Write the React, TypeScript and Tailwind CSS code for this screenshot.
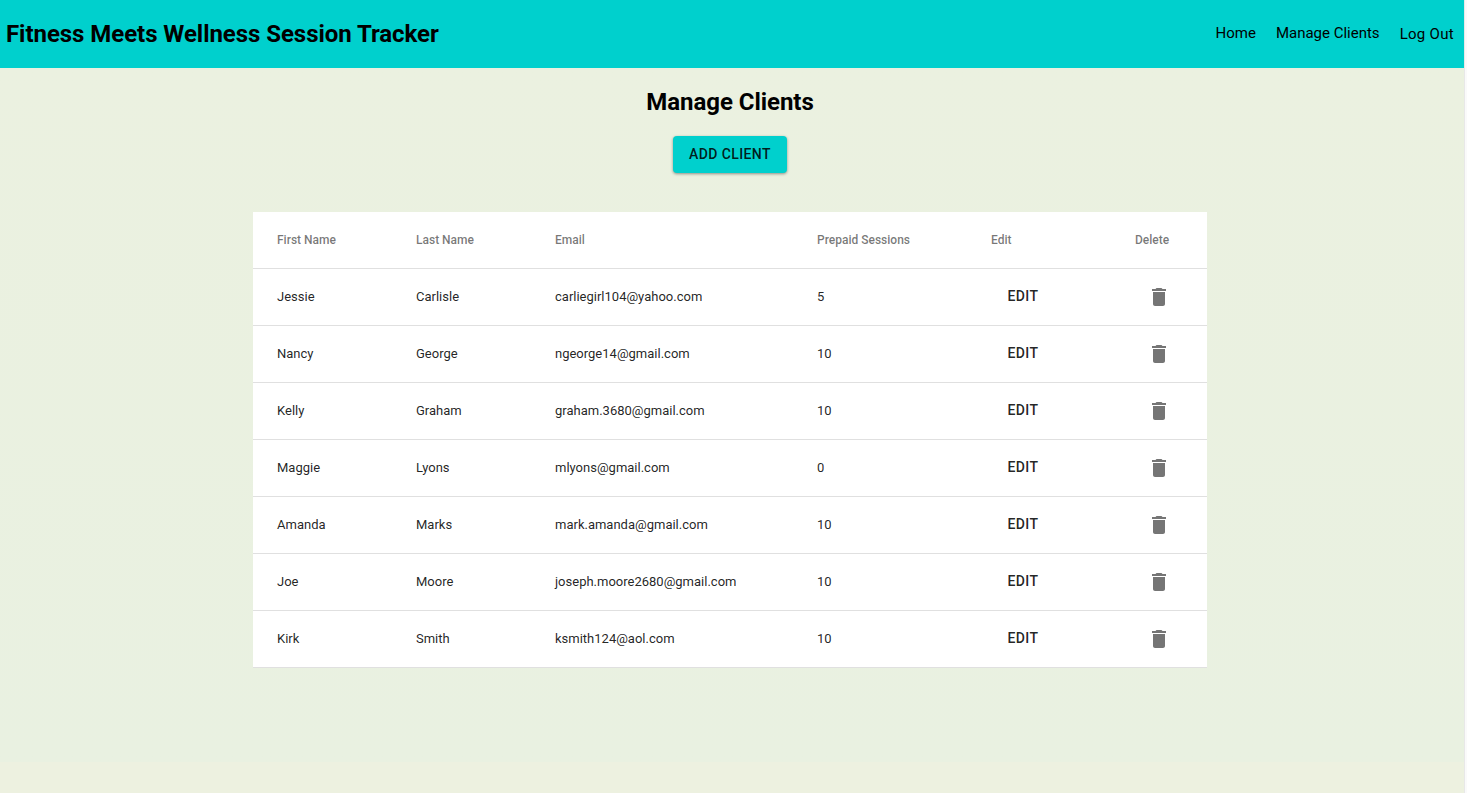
const clients = [
  ["Jessie", "Carlisle", "carliegirl104@yahoo.com", 5],
  ["Nancy", "George", "ngeorge14@gmail.com", 10],
  ["Kelly", "Graham", "graham.3680@gmail.com", 10],
  ["Maggie", "Lyons", "mlyons@gmail.com", 0],
  ["Amanda", "Marks", "mark.amanda@gmail.com", 10],
  ["Joe", "Moore", "joseph.moore2680@gmail.com", 10],
  ["Kirk", "Smith", "ksmith124@aol.com", 10],
];

const rowGrid =
  "grid h-[57px] grid-cols-[139px_139px_262px_174px_144px_1fr] items-center border-b border-[#e0e0e0] pl-6";

function TrashIcon() {
  return (
    <svg viewBox="0 0 24 24" className="h-6 w-6 fill-[#757575]" aria-hidden="true">
      <path d="M6 19c0 1.1.9 2 2 2h8c1.1 0 2-.9 2-2V7H6v12zM19 4h-3.5l-1-1h-5l-1 1H5v2h14V4z" />
    </svg>
  );
}

export default function App() {
  return (
    <div className="flex h-[793px] w-full overflow-hidden bg-[#fafafa] font-['Roboto',sans-serif] text-black">
      <div className="flex h-full w-[1464px] flex-col bg-[#edf1e0]">
        <header className="flex h-[68px] shrink-0 items-center justify-between bg-[#00d0cd] pr-[10px] pl-[6px]">
          <h2 className="text-2xl font-bold tracking-[-0.05px]">Fitness Meets Wellness Session Tracker</h2>
          <nav className="flex gap-5 text-[15px] leading-6">
            <a className="-mt-px">Home</a>
            <a className="-mt-px">Manage Clients</a>
            <a className="tracking-[0.3px]">Log Out</a>
          </nav>
        </header>
        <main className="flex h-[694px] shrink-0 flex-col items-center bg-linear-to-b from-[#ebf1e0] to-[#e9f1e1] pr-1">
          <h2 className="mt-[18px] text-2xl leading-8 font-bold tracking-[-0.05px]">Manage Clients</h2>
          <button className="mt-[18px] h-[37px] w-[114px] rounded bg-[#00d0cd] pb-0.5 text-sm font-medium tracking-[0.4px] text-black/87 shadow-[0_1px_3px_rgba(0,0,0,0.4)]">
            ADD CLIENT
          </button>
          <section className="mt-[39px] w-[954px] bg-white text-[13px] text-black/87">
            <div className={`${rowGrid} text-xs font-medium text-black/54`}>
              <span>First Name</span>
              <span>Last Name</span>
              <span>Email</span>
              <span>Prepaid Sessions</span>
              <span>Edit</span>
              <span>Delete</span>
            </div>
            {clients.map(([first, last, email, sessions]) => (
              <div key={email} className={rowGrid}>
                <span>{first}</span>
                <span>{last}</span>
                <span>{email}</span>
                <span>{sessions}</span>
                <button className="w-16 pb-0.5 text-sm font-medium tracking-[0.4px]">EDIT</button>
                <button className="flex w-12 justify-center">
                  <TrashIcon />
                </button>
              </div>
            ))}
          </section>
        </main>
      </div>
      <div className="w-px bg-[#e8e8e8]" />
    </div>
  );
}
